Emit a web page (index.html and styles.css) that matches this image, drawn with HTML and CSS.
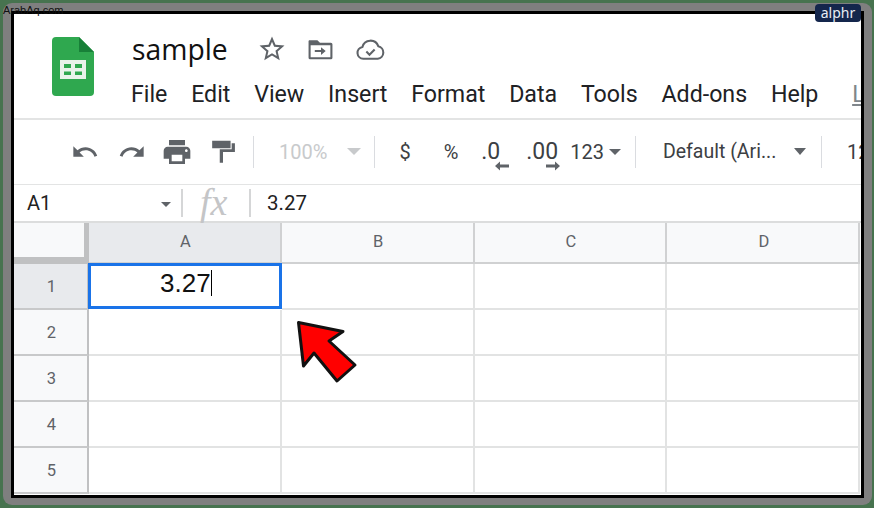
FILE: index.html
```html
<!DOCTYPE html>
<html lang="en">
<head>
<meta charset="utf-8">
<title>sample</title>
<link rel="stylesheet" href="styles.css">
</head>
<body>
<div class="frame">
  <div class="screen">
    <header class="head">
      <svg class="logo" viewBox="0 0 42 59"><path d="M4 0H27L42 15V55a4 4 0 0 1-4 4H4a4 4 0 0 1-4-4V4a4 4 0 0 1 4-4z" fill="#2fa84f"/><path d="M27 0L42 15H27z" fill="#188038"/><path d="M8 23H34V42H8zM12 27V31H19V27zM23 27V31H30V27zM12 34.500V38H19V34.500zM23 34.500V38H30V34.500z" fill="#e8f3ea" fill-rule="evenodd"/></svg>
      <div class="titles">
        <div class="title-row">
          <span class="doc-name">sample</span>
          <svg class="ticon star" viewBox="0 0 24 24"><path d="M22 9.240l-7.190-.620L12 2 9.190 8.630 2 9.240l5.460 4.730L5.820 21 12 17.270 18.180 21l-1.630-7.030L22 9.240zM12 15.400l-3.760 2.270 1-4.280-3.320-2.880 4.380-.380L12 6.100l1.710 4.040 4.380.380-3.320 2.880 1 4.280L12 15.400z"/></svg>
          <svg class="ticon folder" viewBox="0 0 26 24"><path d="M2 3h8l2.500 2.500H23a1.500 1.500 0 0 1 1.500 1.500v13a1.500 1.500 0 0 1-1.500 1.500H3A1.500 1.500 0 0 1 1.500 20V4.500A1.500 1.500 0 0 1 2 3zm1.500 5v11.500h19V8z"/><path d="M7.500 12.500h6V9.800l4.500 3.700-4.500 3.700v-2.700h-6z"/></svg>
          <svg class="ticon cloud" viewBox="0 0 28 22"><path fill="none" stroke-width="2" stroke="#5f6368" d="M7 20a5.800 5.800 0 0 1-.800-11.500A8 8 0 0 1 21.500 7.800 6.200 6.200 0 0 1 21 20z"/><path fill="none" stroke-width="2" stroke="#5f6368" d="M10 13l3 3 5-5"/></svg>
        </div>
        <nav class="menu">
          <span>File</span><span>Edit</span><span>View</span><span>Insert</span><span>Format</span><span>Data</span><span>Tools</span><span>Add-ons</span><span>Help</span><span class="last">L</span>
        </nav>
      </div>
    </header>
    <div class="toolbar">
      <svg class="tool undo" viewBox="0 0 24 24"><path d="M12.500 8c-2.650 0-5.050.990-6.900 2.600L2 7v9h9l-3.620-3.620c1.390-1.160 3.160-1.880 5.120-1.880 3.540 0 6.550 2.310 7.600 5.500l2.370-.780C21.080 11.030 17.150 8 12.500 8z"/></svg>
      <svg class="tool redo" viewBox="0 0 24 24"><path d="M11.500 8c2.650 0 5.050.990 6.900 2.600L22 7v9h-9l3.620-3.620c-1.390-1.160-3.160-1.880-5.120-1.880-3.540 0-6.550 2.310-7.600 5.500l-2.370-.780C2.920 11.030 6.850 8 11.500 8z"/></svg>
      <svg class="tool print" viewBox="0 0 24 24"><path d="M19 8H5c-1.660 0-3 1.340-3 3v6h4v4h12v-4h4v-6c0-1.660-1.340-3-3-3zm-3 11H8v-5h8v5zm3-7c-.550 0-1-.450-1-1s.450-1 1-1 1 .450 1 1-.450 1-1 1zm-1-9H6v4h12V3z"/></svg>
      <svg class="tool paint" viewBox="0 0 24 24"><path d="M2 1.500h17v7H2zM20 4h3v8H12v10H9V9.500h11z"/></svg>
      <i class="sep sep1"></i>
      <span class="zoom-val">100%</span><i class="caret pale"></i>
      <i class="sep sep2"></i>
      <span class="sym dollar">$</span>
      <span class="sym percent">%</span>
      <span class="dec dec-less">.0<svg class="dec-arrow" viewBox="0 0 14 10"><path d="M0 5l5-4.500V3.500h9v3H5v3z"/></svg></span>
      <span class="dec dec-more">.00<svg class="dec-arrow" viewBox="0 0 14 10"><path d="M14 5L9 .500V3.500H0v3h9v3z"/></svg></span>
      <span class="fmt">123</span><i class="caret small"></i>
      <i class="sep sep3"></i>
      <span class="font-name">Default (Ari...</span><i class="caret font-caret"></i>
      <i class="sep sep4"></i>
      <span class="font-size">12</span>
    </div>
    <div class="formula">
      <span class="cell-ref">A1</span><i class="caret ref-caret"></i>
      <i class="fsep"></i>
      <span class="fx">fx</span>
      <i class="fsep"></i>
      <span class="fval">3.27</span>
    </div>
    <div class="sheet">
      <div class="corner"></div>
      <div class="ch active">A</div><div class="ch">B</div><div class="ch">C</div><div class="ch">D</div>
      <div class="rh active">1</div><div class="cell selected"><span class="edit">3.27</span></div><div class="cell"></div><div class="cell"></div><div class="cell"></div>
      <div class="rh">2</div><div class="cell"></div><div class="cell"></div><div class="cell"></div><div class="cell"></div>
      <div class="rh">3</div><div class="cell"></div><div class="cell"></div><div class="cell"></div><div class="cell"></div>
      <div class="rh">4</div><div class="cell"></div><div class="cell"></div><div class="cell"></div><div class="cell"></div>
      <div class="rh">5</div><div class="cell"></div><div class="cell"></div><div class="cell"></div><div class="cell"></div>
    </div>
  </div>
</div>
<svg class="arrow" viewBox="0 0 62 64"><path d="M2.500 2.500L47 11.500 33 21 59 45 41 61 18 33 7.500 46z" fill="#f00" stroke="#111" stroke-width="3" stroke-linejoin="round"/></svg>
<span class="source">ArabAq.com</span>
<span class="badge">alphr</span>
</body>
</html>
```

FILE: styles.css
```css
* { box-sizing: border-box; }
html, body { margin: 0; height: 508px; overflow: hidden; }
body { background: #47734f; font-family: Roboto, "Liberation Sans", sans-serif; position: relative; }
i { display: block; font-style: normal; flex: none; }

.frame { margin: 3px 2px 3px 3px; height: 502px; padding: 8px 8px 7px 8px; background: #7f7f7f; border-radius: 9px; }
.screen { height: 487px; border: 3px solid #000; background: #fff; overflow: hidden; display: flex; flex-direction: column; }

.head { height: 106px; flex: none; display: flex; border-bottom: 2px solid #e3e4e4; padding: 23px 0 0 38px; }
.logo { width: 42px; height: 59px; flex: none; }
.titles { margin-left: 37px; margin-top: -1px; display: flex; flex-direction: column; min-width: 0; }
.title-row { display: flex; align-items: center; height: 26px; }
.doc-name { font-family: "Open Sans", sans-serif; font-size: 28.300px; color: #111; line-height: 26px; width: 125px; margin-left: 1px; flex: none; }
.ticon { fill: #5f6368; flex: none; }
.star { width: 30px; height: 30px; }
.folder { width: 27px; height: 25px; margin-left: 20px; }
.cloud { width: 29px; height: 23px; margin-left: 22px; }
.menu { display: flex; gap: 23.750px; margin-top: 17px; font-size: 23.200px; line-height: 30px; color: #202124; white-space: nowrap; }
.last { color: #80868b; text-decoration: underline; margin-left: 10px; }

.toolbar { height: 65px; flex: none; display: flex; align-items: center; border-bottom: 1px solid #e3e4e4; padding: 0 0 1px 57px; color: #3c4043; white-space: nowrap; }
.tool { fill: #5f6368; width: 28px; height: 28px; flex: none; }
.redo { margin-left: 19px; }
.print { margin-left: 15px; width: 32px; height: 32px; }
.paint { margin-left: 17px; width: 26px; height: 26px; }
.sep { width: 1px; height: 32px; background: #dadce0; }
.sep1 { margin-left: 17px; }
.zoom-val { margin-left: 25px; font-size: 20px; color: #c8cacc; width: 49px; }
.caret { width: 0; height: 0; border: 7px solid transparent; border-top: 7px solid #5f6368; border-bottom: 0; }
.caret.pale { border-top-color: #c8cacc; margin-left: 20px; }
.sep2 { margin-left: 13px; }
.sym { font-size: 20px; text-align: center; }
.dollar { margin-left: 24px; width: 17px; }
.percent { margin-left: 33px; width: 17px; font-size: 20px; }
.dec { position: relative; font-size: 23px; margin-left: 23px; line-height: 24px; }
.dec-more { margin-left: 26px; }
.dec-arrow { position: absolute; width: 14px; height: 10px; top: 21px; fill: #5f6368; }
.dec-less .dec-arrow { right: -9px; }
.dec-more .dec-arrow { right: -2px; }
.fmt { margin-left: 12px; font-size: 20px; }
.caret.small { border-width: 6px; border-top-width: 6px; border-bottom: 0; margin-left: 5px; }
.sep3 { margin-left: 14px; }
.font-name { margin-left: 27px; font-size: 19.500px; width: 122px; flex: none; }
.font-caret { margin-left: 9px; border-width: 6px; border-top-width: 7px; border-bottom: 0; }
.sep4 { margin-left: 15px; }
.font-size { margin-left: 25px; font-size: 20px; }

.formula { height: 38px; flex: none; display: flex; align-items: center; border-bottom: 2px solid #dcdddd; color: #222; }
.cell-ref { font-size: 20px; margin-left: 13px; width: 134px; flex: none; }
.ref-caret { border-width: 5px; border-top-width: 5px; border-bottom: 0; margin-top: 2px; }
.formula .fsep { width: 2px; height: 28px; background: #d5d6d7; }
.ref-caret + .fsep { margin-left: 10px; }
.fx { font-family: "Liberation Serif", serif; font-style: italic; font-size: 38px; color: #c4c5c7; width: 66px; padding-left: 17px; line-height: 32px; margin-bottom: 3px; flex: none; }
.fval { font-size: 20.500px; margin-left: 16px; }

.sheet { flex: 1; display: grid; grid-template-columns: 75px repeat(4, 192.800px); grid-template-rows: 41px repeat(5, 46px); }
.corner { background: #f8f9fa; border-right: 5px solid #c0c1c2; border-bottom: 7px solid #c0c1c2; }
.ch, .rh { display: flex; align-items: center; justify-content: center; color: #5f6368; background: #f8f9fa; padding-left: 2px; }
.ch { font-size: 16.500px; border-right: 2px solid #d0d1d2; border-bottom: 2px solid #d0d1d2; padding-bottom: 3px; }
.rh { font-size: 16.500px; border-right: 2px solid #c0c1c2; border-bottom: 2px solid #c8c9ca; }
.active { background: #e8eaed; }
.cell { border-right: 2px solid #e2e3e3; border-bottom: 2px solid #e2e3e3; }
.selected { border: 3px solid #1a73e8; margin: -1px 0 1px -1px; padding-left: 2px; display: flex; align-items: center; justify-content: center; font-family: "Liberation Sans", Arial, sans-serif; font-size: 26px; color: #111; }
.edit { border-right: 1px solid #000; line-height: 26px; margin-bottom: 6px; }

.arrow { position: absolute; left: 296px; top: 320px; width: 62px; height: 64px; }
.source { position: absolute; left: 3px; top: 4px; font-family: "Liberation Sans", sans-serif; font-size: 11px; line-height: 12px; color: #111; }
.badge { position: absolute; left: 815px; top: 4px; width: 46px; height: 18px; background: #14264c; border-radius: 4px; color: #e8ecf4; font-family: "Noto Sans", sans-serif; font-size: 14px; line-height: 17px; text-align: center; }
```
